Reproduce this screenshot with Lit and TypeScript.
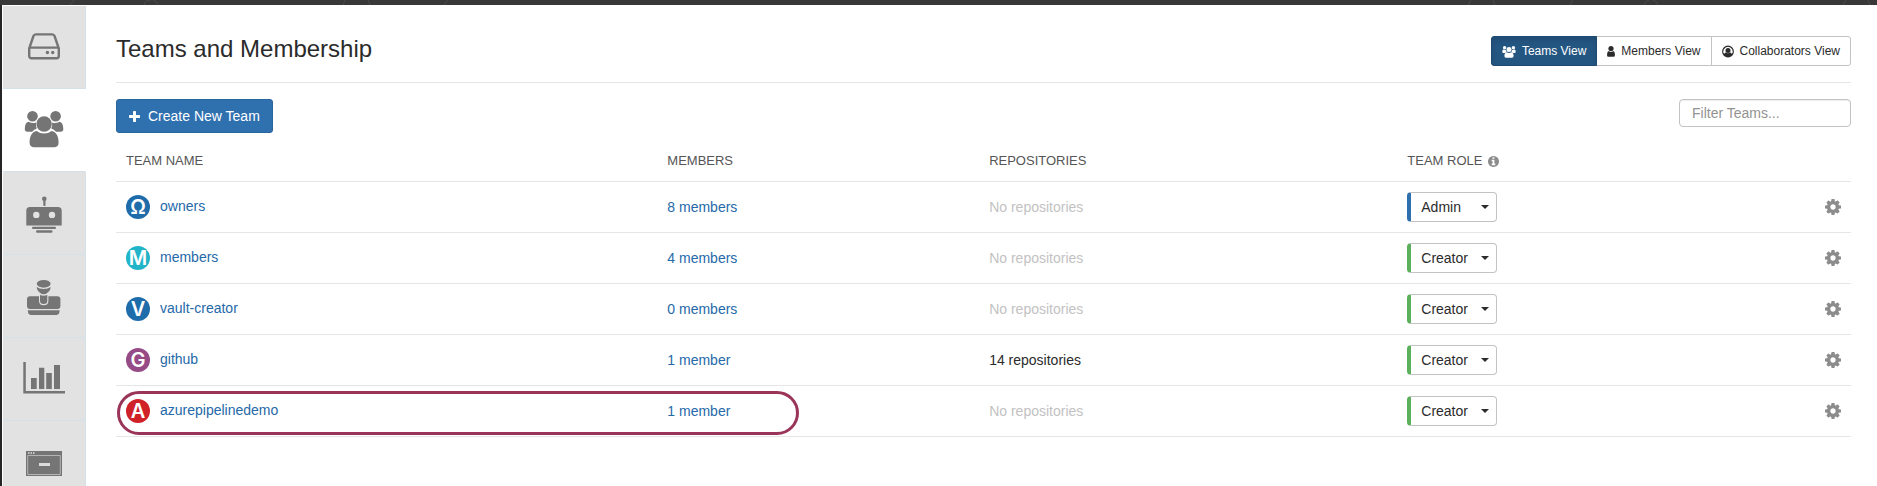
import { LitElement, html, svg, css, TemplateResult } from "lit";
import { customElement, property, state } from "lit/decorators.js";
import { classMap } from "lit/directives/class-map.js";

type Role = "Admin" | "Creator" | "Member";

interface Team {
  name: string;
  letter: string;
  tone: string;
  members: number;
  repositories: number;
  role: Role;
  outlined?: boolean;
}

const TEAMS: Team[] = [
  { name: "owners", letter: "Ω", tone: "blue", members: 8, repositories: 0, role: "Admin" },
  { name: "members", letter: "M", tone: "teal", members: 4, repositories: 0, role: "Creator" },
  { name: "vault-creator", letter: "V", tone: "blue", members: 0, repositories: 0, role: "Creator" },
  { name: "github", letter: "G", tone: "purple", members: 1, repositories: 14, role: "Creator" },
  { name: "azurepipelinedemo", letter: "A", tone: "red", members: 1, repositories: 0, role: "Creator", outlined: true },
];

const plural = (n: number, one: string, many: string) => `${n} ${n === 1 ? one : many}`;

const GEAR =
  "M1152 896q0-106-75-181t-181-75-181 75-75 181 75 181 181 75 181-75 75-181zm512-109v222q0 12-8 23t-20 13l-185 28q-19 54-39 91 35 50 107 138 10 12 10 25t-9 23q-27 37-99 108t-94 71q-12 0-26-9l-138-108q-44 23-91 38-16 136-29 186-7 28-36 28h-222q-14 0-24.5-8.5t-11.5-21.5l-28-184q-49-16-90-37l-141 107q-10 9-25 9-14 0-25-11-126-114-165-168-7-10-7-23 0-12 8-23 15-21 51-66.5t54-70.5q-27-50-41-99l-183-27q-13-2-21-12.5t-8-23.5v-222q0-12 8-23t19-13l186-28q14-46 39-92-40-57-107-138-10-12-10-24 0-10 9-23 26-36 98.5-107.5t94.5-71.5q13 0 26 10l138 107q44-23 91-38 16-136 29-186 7-28 36-28h222q14 0 24.5 8.5t11.5 21.5l28 184q49 16 90 37l142-107q9-9 24-9 13 0 25 10 129 119 165 170 7 8 7 22 0 12-8 23-15 21-51 66.5t-54 70.5q26 50 41 98l183 28q13 2 21 12.5t8 23.5z";
const INFO =
  "M1152 1376v-160q0-14-9-23t-23-9h-96v-512q0-14-9-23t-23-9h-320q-14 0-23 9t-9 23v160q0 14 9 23t23 9h96v320h-96q-14 0-23 9t-9 23v160q0 14 9 23t23 9h448q14 0 23-9t9-23zm-128-896v-160q0-14-9-23t-23-9h-192q-14 0-23 9t-9 23v160q0 14 9 23t23 9h192q14 0 23-9t9-23zm640 416q0 209-103 385.5t-279.5 279.5-385.5 103-385.5-103-279.5-279.5-103-385.5 103-385.5 279.5-279.5 385.5-103 385.5 103 279.5 279.5 103 385.5z";
const PLUS =
  "M1600 736v192q0 40-28 68t-68 28h-416v416q0 40-28 68t-68 28h-192q-40 0-68-28t-28-68v-416h-416q-40 0-68-28t-28-68v-192q0-40 28-68t68-28h416v-416q0-40 28-68t68-28h192q40 0 68 28t28 68v416h416q40 0 68 28t28 68z";

/* Navigation glyphs, all drawn on a 47 x 48 grid. */
const NAV: { label: string; current?: boolean; art: TemplateResult }[] = [
  {
    label: "Repositories",
    art: svg`<path d="M8.200 25.500V33a2.200 2.200 0 0 0 2.200 2.200h25.200A2.200 2.200 0 0 0 37.800 33v-7.500L33.600 13.200A2.600 2.600 0 0 0 31.200 11.400H14.800A2.600 2.600 0 0 0 12.400 13.200ZM8.500 24.600H37.500" fill="none" stroke="currentColor" stroke-width="2.4"/><circle cx="26.400" cy="29.500" r="1.700"/><circle cx="31.700" cy="29.500" r="1.700"/>`,
  },
  {
    label: "Teams",
    current: true,
    art: svg`<circle cx="11.500" cy="10.200" r="5.300"/><circle cx="34.600" cy="10.200" r="5.300"/><path d="M7.500 15.800q-3.700 1-3.700 7.200 0 2.800 2.700 2.800h4.600q2-2.500 4.700-3.400-1.200-2.700-.8-6-3.200 1.400-7.500-.6zM38.600 15.800q3.700 1 3.700 7.200 0 2.800-2.700 2.800H35q-2-2.500-4.700-3.400 1.200-2.700.8-6 3.200 1.400 7.500-.6z"/><circle cx="23.100" cy="18" r="7.700"/><path d="M15.700 25q3 2.600 7.400 2.600T30.500 25c5 .8 7.100 5.500 7.100 11.500 0 3.300-1.600 4.700-4.600 4.700H13.200c-3 0-4.600-1.400-4.600-4.700 0-6 2.100-10.700 7.100-11.500z"/>`,
  },
  {
    label: "Service accounts",
    art: svg`<circle cx="23.300" cy="9.800" r="2.300"/><rect x="22.300" y="10" width="2.200" height="7" rx=".8"/><path fill-rule="evenodd" d="M9 18h28a3.700 3.700 0 0 1 3.700 3.700V36.500H5.300V21.700A3.700 3.700 0 0 1 9 18zm6.300 4.700a3.200 3.200 0 1 0 0 6.400 3.200 3.200 0 1 0 0-6.400zm15.700 0a3.200 3.200 0 1 0 0 6.400 3.200 3.200 0 1 0 0-6.400z"/><rect x="11" y="37.800" width="24" height="2.300" rx="1.100"/><rect x="15" y="41.200" width="16.500" height="2.500" rx="1.200"/>`,
  },
  {
    label: "Policies",
    art: svg`<ellipse cx="22.700" cy="11.800" rx="6.900" ry="3.900"/><path d="M15.800 15q2.400 1.900 6.900 1.900t6.900-1.900q0 3.500-3.200 5.700-1.400 1.500-3.700 1.500t-3.700-1.500q-3.200-2.200-3.200-5.700zM19 23q3.700 1.400 7.300 0v5.700q0 3.300-3.600 3.300T19 28.700z"/><path d="M9 24.200h9v4.500q0 4.500 4.700 4.500t4.700-4.500v-4.500h9a3 3 0 0 1 3 3V34a3 3 0 0 1-3 3H9a3 3 0 0 1-3-3v-6.800a3 3 0 0 1 3-3zM6.800 38.300h31.800q0 4.600-3 4.600H9.800q-3 0-3-4.600z"/>`,
  },
  {
    label: "Usage",
    art: svg`<path d="M2.300 7h2.500v29H44v2.500H2.300zM10 23h5.700v11H10zM18 12.800h5.300V34H18zM25.200 18h5.600v16h-5.600zM33 10h6v24h-6z"/>`,
  },
  {
    label: "Webhooks",
    art: svg`<rect x="5" y="13" width="36" height="25"/><path d="M6.700 17.500h32.600v19H6.700z" fill="none" stroke="#b4b4b4" stroke-width="1"/><path d="M7 14h1.500v2H7zM9.500 14H11v2H9.500zM12 14h1.500v2H12z" fill="#c6c6c6"/><path d="M18 25h11v3H18z" fill="#dcdcdc"/>`,
  },
];

const ICON_USERS = svg`<circle cx="2.600" cy="2.800" r="1.700"/><circle cx="11.400" cy="2.800" r="1.700"/><circle cx="7" cy="4.500" r="2.500"/><path d="M1.200 4.600q1.400.7 2.700.3.100 1.300.8 2.200-.9.200-1.500.9H1.300Q.3 8 .3 7q0-1.900.9-2.400zM12.800 4.600q-1.400.7-2.700.3-.1 1.300-.8 2.200.9.200 1.500.9h1.900q1 0 1-1 0-1.900-.9-2.400zM4.600 7.300q2.400 1.200 4.800 0 2.200.5 2.200 3.800 0 1.600-1.600 1.600H4q-1.600 0-1.600-1.600 0-3.300 2.200-3.800z"/>`;
const ICON_USER = svg`<circle cx="4" cy="3.600" r="2.600"/><path d="M1.700 6.100q2.300 2 4.600 0Q8 6.700 8 9.900q0 1.900-1.500 1.900h-5Q0 11.800 0 9.900 0 6.700 1.700 6.100z"/>`;
const ICON_USER_CIRCLE = svg`<path fill-rule="evenodd" d="M6 .6a5.900 5.900 0 1 1 0 11.800A5.900 5.900 0 1 1 6 .6zm0 1.200a4.700 4.700 0 0 0-3.900 7.300q.4-1.400 1.700-1.600Q6 9 8.200 7.500q1.300.2 1.700 1.600A4.700 4.700 0 0 0 6 1.800z"/><circle cx="6" cy="5.400" r="2.500"/>`;

@customElement("side-nav")
export class SideNav extends LitElement {
  static styles = css`
    :host {
      display: block;
      flex: none;
      overflow: hidden;
      border-left: 2px solid #262626;
      padding: 1px 0 0 1px;
    }
    .item {
      display: flex;
      align-items: center;
      justify-content: center;
      width: 83px;
      height: 83px;
      box-sizing: border-box;
      color: #757575;
      background: #e2e2e2;
      border-right: 1px solid #d5e1e9;
      border-bottom: 1px solid #d5e1e9;
    }
    .item.current {
      background: #fff;
      border-right-color: #fff;
    }
    .glyph {
      width: 47px;
      height: 48px;
      fill: currentColor;
    }
  `;

  render() {
    return html`<nav aria-label="Organization">
      ${NAV.map(
        (n) => html`<a class=${classMap({ item: true, current: !!n.current })} href="#" aria-label=${n.label}>
          <svg class="glyph" viewBox="0 0 47 48" aria-hidden="true">${n.art}</svg>
        </a>`
      )}
    </nav>`;
  }
}

@customElement("role-select")
export class RoleSelect extends LitElement {
  @property() value: Role = "Creator";
  @property() team = "";

  static styles = css`
    :host {
      display: block;
    }
    .box {
      display: grid;
      align-items: center;
      width: 90px;
      height: 30px;
      box-sizing: border-box;
      border: 1px solid #c3c3c3;
      border-left: 4px solid #5cb05c;
      border-radius: 4px;
      background: #fff;
    }
    .box.admin {
      border-left-color: #2f70af;
    }
    .select {
      grid-area: 1 / 1;
      appearance: none;
      width: 100%;
      height: 28px;
      margin: 0;
      border: 0;
      padding: 0 20px 0 10px;
      background: transparent;
      color: #2b2b2b;
      font: 14px/20px "Liberation Sans", Arial, sans-serif;
    }
    .caret {
      grid-area: 1 / 1;
      justify-self: end;
      margin-right: 7px;
      width: 8px;
      height: 4px;
      fill: #2b2b2b;
      pointer-events: none;
    }
  `;

  private onChange(e: Event) {
    this.value = (e.target as HTMLSelectElement).value as Role;
  }

  render() {
    return html`<div class=${classMap({ box: true, admin: this.value === "Admin" })}>
      <select class="select" aria-label="Role of ${this.team}" @change=${this.onChange}>
        ${["Admin", "Creator", "Member"].map((r) => html`<option ?selected=${r === this.value}>${r}</option>`)}
      </select>
      <svg class="caret" viewBox="0 0 8 4" aria-hidden="true"><path d="M0 0h8L4 4z" /></svg>
    </div>`;
  }
}

@customElement("app-root")
export class AppRoot extends LitElement {
  @state() private view = 0;
  @state() private filter = "";

  static styles = css`
    :host {
      display: flex;
      flex-direction: column;
      height: 100vh;
      background: #fff;
      color: #2b2b2b;
      font: 14px/20px "Liberation Sans", Arial, sans-serif;
    }
    .topbar {
      flex: none;
      height: 5px;
      background: #383838;
    }
    .traces {
      display: block;
      width: 100%;
      height: 5px;
      fill: none;
      stroke: #4a4a4a;
    }
    .shell {
      display: flex;
      flex: 1;
      min-height: 0;
    }
    .main {
      flex: 1;
      min-width: 0;
      overflow: auto;
      padding: 31px 26px 0 30px;
    }
    .head {
      display: flex;
      justify-content: space-between;
      align-items: center;
      padding-bottom: 16px;
      border-bottom: 1px solid #e6e6e6;
    }
    .title {
      margin: 0;
      padding-bottom: 4px;
      font-size: 24px;
      line-height: 26px;
      font-weight: 400;
    }
    .views {
      display: flex;
    }
    .view {
      display: flex;
      align-items: center;
      gap: 6px;
      height: 30px;
      box-sizing: border-box;
      margin: 0 0 0 -1px;
      padding: 0 10px;
      border: 1px solid #c3c3c3;
      background: #fff;
      color: #2b2b2b;
      font: 12px/18px "Liberation Sans", Arial, sans-serif;
    }
    .view:first-child {
      margin: 0;
      border-radius: 3px 0 0 3px;
    }
    .view:last-child {
      border-radius: 0 3px 3px 0;
    }
    .view.on {
      background: #245682;
      border-color: #1c4a72;
      color: #fff;
      box-shadow: inset 0 3px 5px rgba(0, 0, 0, 0.125);
      position: relative;
    }
    .small-glyph {
      height: 13px;
      fill: currentColor;
    }
    .toolbar {
      display: flex;
      justify-content: space-between;
      align-items: flex-start;
      padding: 16px 0 10px;
    }
    .create {
      display: flex;
      align-items: center;
      gap: 8px;
      height: 34px;
      box-sizing: border-box;
      padding: 0 12px;
      border: 1px solid #2a659e;
      border-radius: 3px;
      background: #2f70af;
      color: #fff;
      font: 14px/20px "Liberation Sans", Arial, sans-serif;
    }
    .plus {
      width: 11px;
      height: 11px;
      fill: currentColor;
    }
    .filter {
      width: 172px;
      height: 28px;
      box-sizing: border-box;
      margin: 0;
      padding: 0 12px;
      border: 1px solid #c3c3c3;
      border-radius: 4px;
      box-shadow: inset 0 1px 1px rgba(0, 0, 0, 0.075);
      color: #2b2b2b;
      font: 14px/20px "Liberation Sans", Arial, sans-serif;
    }
    .filter::placeholder {
      color: #939393;
      opacity: 1;
    }
    .teams {
      width: 100%;
      table-layout: fixed;
      border-collapse: separate;
      border-spacing: 0;
    }
    .c-name {
      width: 31.2%;
    }
    .c-members {
      width: 18.55%;
    }
    .c-repos {
      width: 24.1%;
    }
    .c-gear {
      width: 60px;
    }
    .th {
      padding: 8px 10px 10px;
      border-bottom: 1px solid #e6e6e6;
      text-align: left;
      font-size: 13px;
      font-weight: 400;
      color: #555;
    }
    .row {
      position: relative;
    }
    .td {
      height: 50px;
      padding: 0 10px;
      border-bottom: 1px solid #e6e6e6;
      vertical-align: middle;
    }
    .link {
      color: #2569a8;
      text-decoration: none;
    }
    .name {
      display: flex;
      align-items: center;
      gap: 10px;
    }
    .name .link {
      padding-bottom: 2px;
    }
    .avatar {
      display: flex;
      align-items: center;
      justify-content: center;
      width: 24px;
      height: 24px;
      border-radius: 50%;
      color: #fff;
      font: 600 20px/24px Inter, "Liberation Sans", sans-serif;
    }
    .blue {
      background: #1f6cab;
    }
    .teal {
      background: #22b5c9;
    }
    .purple {
      background: #964b87;
    }
    .red {
      background: #d02028;
    }
    .none {
      color: #c2c2c2;
    }
    .role-head {
      display: flex;
      align-items: center;
      gap: 6px;
    }
    .info {
      width: 11px;
      height: 11px;
      fill: #8c8c8c;
    }
    .gear-btn {
      display: block;
      margin: 0 0 0 auto;
      padding: 0;
      border: 0;
      background: none;
    }
    .gear {
      display: block;
      width: 16px;
      height: 16px;
      fill: #8c8c8c;
    }
    .ring {
      position: absolute;
      top: 5px;
      left: 1px;
      width: 39.3%;
      height: 44px;
      box-sizing: border-box;
      border: 3px solid #9a3459;
      border-radius: 22px;
      pointer-events: none;
    }
  `;

  private viewButton(index: number, label: string, width: number, art: TemplateResult) {
    const on = this.view === index;
    return html`<button
      type="button"
      class=${classMap({ view: true, on })}
      aria-pressed=${on ? "true" : "false"}
      @click=${() => (this.view = index)}
    >
      <svg class="small-glyph" width=${width} viewBox="0 0 ${width} 13" aria-hidden="true">${art}</svg>${label}
    </button>`;
  }

  private row(t: Team) {
    return html`<tr class="row">
      <td class="td">
        <div class="name">
          <span class="avatar ${t.tone}" aria-hidden="true">${t.letter}</span>
          <a class="link" href="#">${t.name}</a>
        </div>
        ${t.outlined ? html`<div class="ring"></div>` : ""}
      </td>
      <td class="td"><a class="link" href="#">${plural(t.members, "member", "members")}</a></td>
      <td class="td">
        ${t.repositories
          ? plural(t.repositories, "repository", "repositories")
          : html`<span class="none">No repositories</span>`}
      </td>
      <td class="td"><role-select .value=${t.role} .team=${t.name}></role-select></td>
      <td class="td">
        <button class="gear-btn" type="button" aria-label="Settings of ${t.name}">
          <svg class="gear" viewBox="128 128 1536 1536" aria-hidden="true"><path d=${GEAR} /></svg>
        </button>
      </td>
    </tr>`;
  }

  render() {
    const shown = TEAMS.filter((t) => t.name.includes(this.filter.toLowerCase()));
    return html`
      <div class="topbar">
        <svg class="traces" aria-hidden="true">
          <path d="M74 0l-4 5M144 5q1-5 7-5M158 5q-1-4-5-5M343 5l2-5M370 5l-2-5M444 5l4-5M1468 5l3-5M1495 5l-2-5M1570 5l3-5M1644 5q1-4 5-5M1658 5q-1-4-5-5M1843 5l3-5M1870 5l-2-5" />
        </svg>
      </div>
      <div class="shell">
        <side-nav></side-nav>
        <main class="main">
          <header class="head">
            <h1 class="title">Teams and Membership</h1>
            <div class="views" role="group" aria-label="View">
              ${this.viewButton(0, "Teams View", 14, ICON_USERS)}
              ${this.viewButton(1, "Members View", 8, ICON_USER)}
              ${this.viewButton(2, "Collaborators View", 12, ICON_USER_CIRCLE)}
            </div>
          </header>
          <div class="toolbar">
            <button class="create" type="button">
              <svg class="plus" viewBox="192 128 1408 1408" aria-hidden="true"><path d=${PLUS} /></svg>Create New Team
            </button>
            <input
              class="filter"
              type="text"
              placeholder="Filter Teams..."
              aria-label="Filter teams"
              @input=${(e: Event) => (this.filter = (e.target as HTMLInputElement).value)}
            />
          </div>
          <table class="teams">
            <colgroup>
              <col class="c-name" />
              <col class="c-members" />
              <col class="c-repos" />
              <col />
              <col class="c-gear" />
            </colgroup>
            <thead>
              <tr>
                <th class="th" scope="col">TEAM NAME</th>
                <th class="th" scope="col">MEMBERS</th>
                <th class="th" scope="col">REPOSITORIES</th>
                <th class="th" scope="col">
                  <div class="role-head">
                    TEAM ROLE
                    <svg class="info" viewBox="128 128 1536 1536" aria-hidden="true"><path d=${INFO} /></svg>
                  </div>
                </th>
                <td class="th"></td>
              </tr>
            </thead>
            <tbody>
              ${shown.map((t) => this.row(t))}
            </tbody>
          </table>
        </main>
      </div>
    `;
  }
}
